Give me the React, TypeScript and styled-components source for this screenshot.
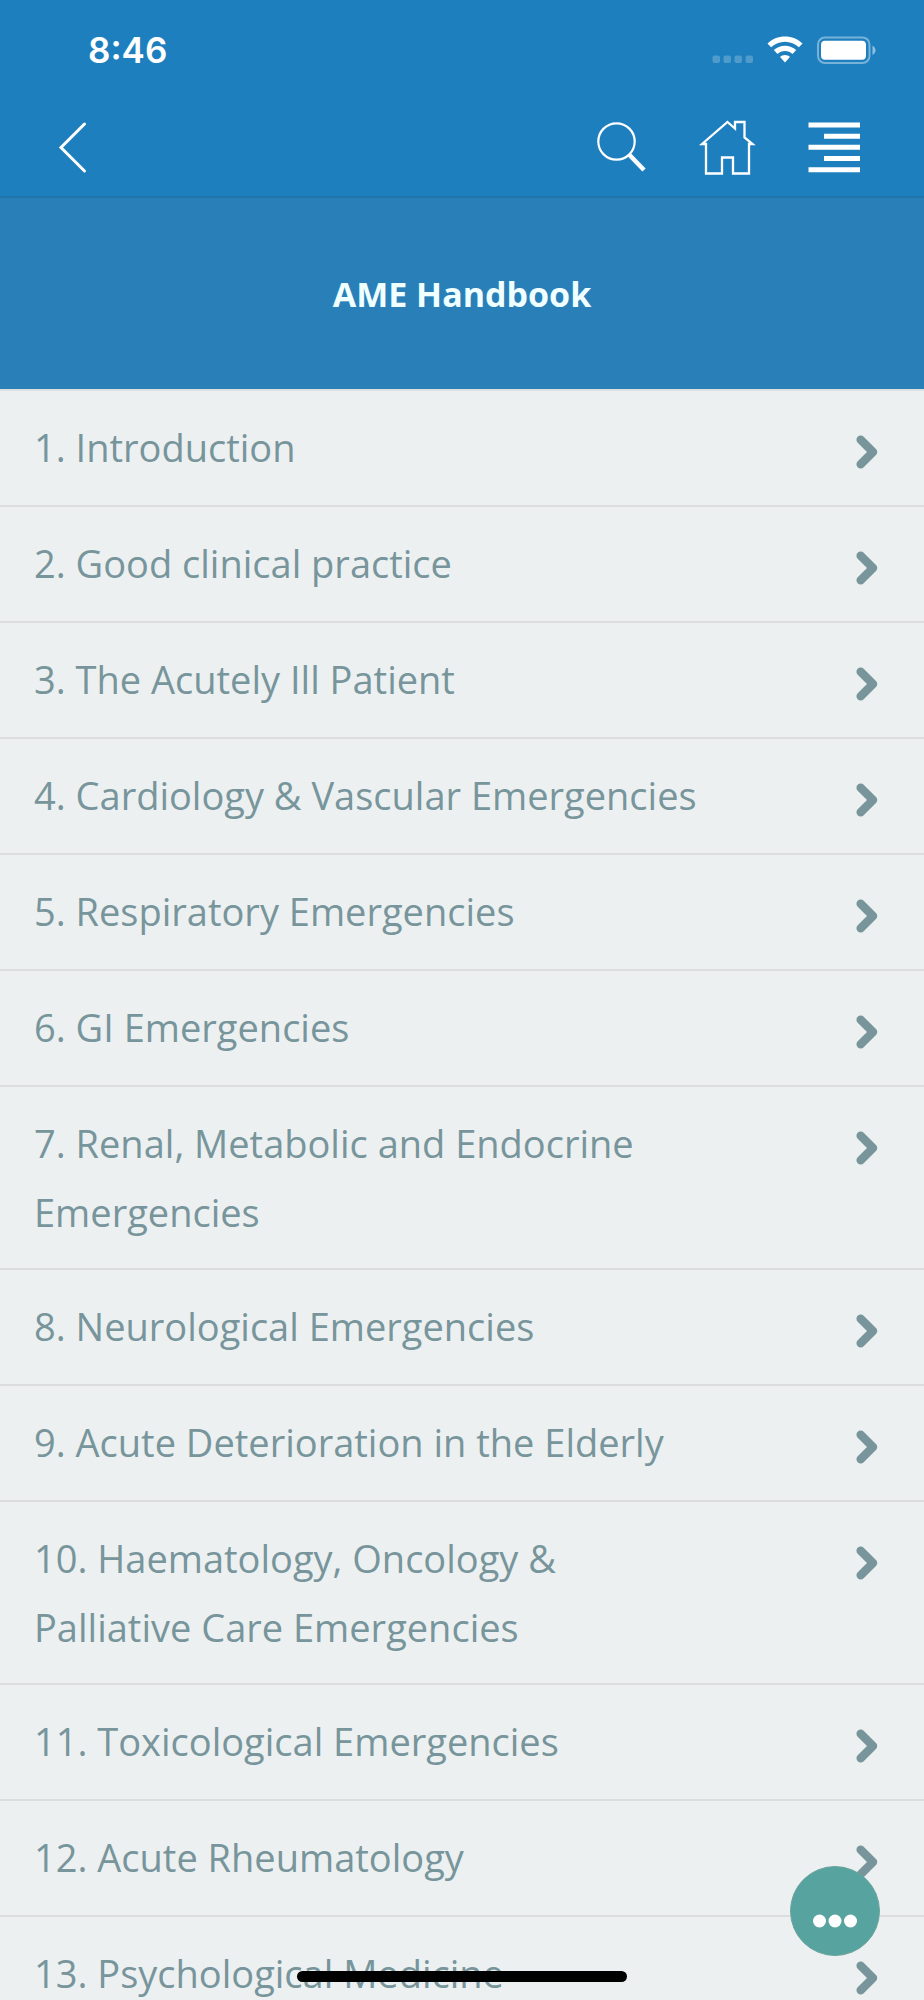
import React from "react";
import styled, { createGlobalStyle } from "styled-components";

const GlobalStyle = createGlobalStyle`
  *, *::before, *::after { box-sizing: border-box; }
  body { margin: 0; background: #ecf0f1; }
`;

const Screen = styled.div`
  position: relative;
  display: flex;
  flex-direction: column;
  height: 100vh;
  overflow: hidden;
  background: #ecf0f1;
  color: #77959b;
  font-family: "Open Sans", "Noto Sans", sans-serif;
`;

const Header = styled.header`
  flex: none;
  background: #1e7fbe;
  border-bottom: 2px solid #2075ac;
`;

const StatusBar = styled.div`
  display: flex;
  align-items: center;
  justify-content: space-between;
  height: 100px;
  padding: 0 48px 0 88px;
  color: #fff;
`;

const Clock = styled.time`
  font-family: Inter, "Liberation Sans", sans-serif;
  font-size: 35px;
  font-weight: 600;
  line-height: 44px;
`;

const Indicators = styled.div`
  display: flex;
  align-items: center;
  gap: 14px;
`;

const NavBar = styled.nav`
  display: flex;
  align-items: center;
  justify-content: space-between;
  height: 96px;
  padding: 0 63px 0 44px;
`;

const NavActions = styled.div`
  display: flex;
  align-items: center;
  gap: 47px;
`;

const IconButton = styled.button`
  display: grid;
  place-items: center;
  padding: 0;
  border: 0;
  background: none;
  color: #fff;
  cursor: pointer;
`;

const Banner = styled.div`
  display: grid;
  place-items: center;
  flex: none;
  height: 191px;
  background: #2980b9;
`;

const Title = styled.h1`
  margin: 0;
  color: #f0ffff;
  font-size: 34px;
  font-weight: 700;
  line-height: 44px;
`;

const ChapterList = styled.ul`
  flex: 1;
  min-height: 0;
  margin: 0;
  padding: 0;
  list-style: none;
  overflow-y: auto;
  scrollbar-width: none;
  border-top: 2px solid #dddfe0;
`;

const Chapter = styled.li`
  border-bottom: 2px solid #dbdddf;
`;

const ChapterLink = styled.a`
  display: flex;
  align-items: flex-start;
  justify-content: space-between;
  min-height: 114px;
  padding: 22px 46px 21px 34px;
  color: inherit;
  text-decoration: none;
`;

const ChapterName = styled.span`
  flex: 0 1 80%;
  font-size: 38px;
  line-height: 69px;
`;

const Chevron = styled.svg`
  flex: none;
  margin-top: 22px;
`;

const MoreButton = styled.button`
  position: absolute;
  right: 44px;
  bottom: 44px;
  display: grid;
  place-items: center;
  width: 90px;
  height: 90px;
  padding: 20px 0 0;
  border: 1px solid #6ba49c;
  border-radius: 50%;
  background: #57a3a0;
  cursor: pointer;
`;

const HomeIndicator = styled.div`
  position: absolute;
  left: 50%;
  bottom: 18px;
  width: 330px;
  height: 11px;
  border-radius: 6px;
  background: #000;
  transform: translateX(-50%);
`;

const chapters = [
  "Introduction",
  "Good clinical practice",
  "The Acutely Ill Patient",
  "Cardiology & Vascular Emergencies",
  "Respiratory Emergencies",
  "GI Emergencies",
  "Renal, Metabolic and Endocrine Emergencies",
  "Neurological Emergencies",
  "Acute Deterioration in the Elderly",
  "Haematology, Oncology & Palliative Care Emergencies",
  "Toxicological Emergencies",
  "Acute Rheumatology",
  "Psychological Medicine",
];

const SignalDots = () => (
  <svg width="41" height="28" viewBox="0 0 41 28" fill="#fff" fillOpacity="0.22" aria-hidden="true">
    {[0.5, 11.5, 22.5, 33.5].map((x) => (
      <rect key={x} x={x} y="19.5" width="7.5" height="7.5" rx="2" />
    ))}
  </svg>
);

const Wifi = () => (
  <svg width="36" height="28" viewBox="0 0 36 28" fill="#fff" aria-hidden="true">
    <path d="M18 .5c6.700 0 12.900 2.600 17.500 7l-3.600 3.800C28.200 7.800 23.300 5.700 18 5.700S7.800 7.800 4.100 11.300L.5 7.500C5.100 3.100 11.300.5 18 .5z" />
    <path d="M18 9.700c4.300 0 8.200 1.600 11.200 4.400l-3.700 3.800c-2-1.800-4.600-2.900-7.500-2.900s-5.500 1.100-7.500 2.900l-3.700-3.800c3-2.800 6.900-4.400 11.200-4.400z" />
    <path d="M18 19c1.900 0 3.600.7 4.900 1.900L18 26.500l-4.900-5.600C14.400 19.700 16.100 19 18 19z" />
  </svg>
);

const Battery = () => (
  <svg width="59" height="28" viewBox="0 0 59 28" aria-hidden="true">
    <rect x="1" y="1.500" width="51.500" height="25.500" rx="7" fill="none" stroke="#fff" strokeOpacity="0.4" strokeWidth="2" />
    <rect x="4" y="4.700" width="45" height="19" rx="4" fill="#fff" />
    <path d="M55.500 9.700c1.900.8 3 2.600 3 4.600s-1.100 3.800-3 4.600z" fill="#fff" fillOpacity="0.5" />
  </svg>
);

const BackIcon = () => (
  <svg width="58" height="58" viewBox="0 0 58 58" fill="none" stroke="currentColor" strokeWidth="3" strokeLinecap="round" aria-hidden="true">
    <path d="M40.500 5 17 28.500 40.500 52" />
  </svg>
);

const SearchIcon = () => (
  <svg width="58" height="58" viewBox="0 0 58 58" fill="none" stroke="currentColor" aria-hidden="true">
    <circle cx="23.500" cy="22.500" r="18.200" strokeWidth="2.200" />
    <path d="M36 35.500 51 51" strokeWidth="4.500" />
  </svg>
);

const HomeIcon = () => (
  <svg width="58" height="58" viewBox="0 0 58 58" fill="none" stroke="currentColor" strokeWidth="2.300" aria-hidden="true">
    <path d="M29.500 3 37 9.500V3h9.500v15.500l8 6.500H51v29.500H35V38.500H24v16H8V25H4z" />
  </svg>
);

const MenuIcon = () => (
  <svg width="58" height="58" viewBox="0 0 58 58" stroke="currentColor" strokeWidth="5" aria-hidden="true">
    <path d="M5.500 6H57M21 17.200H57M5.500 28.300H57M21 39.500H57M5.500 50.700H57" />
  </svg>
);

export default function App() {
  return (
    <Screen>
      <GlobalStyle />
      <Header>
        <StatusBar>
          <Clock>8:46</Clock>
          <Indicators>
            <SignalDots />
            <Wifi />
            <Battery />
          </Indicators>
        </StatusBar>
        <NavBar>
          <IconButton aria-label="Back"><BackIcon /></IconButton>
          <NavActions>
            <IconButton aria-label="Search"><SearchIcon /></IconButton>
            <IconButton aria-label="Home"><HomeIcon /></IconButton>
            <IconButton aria-label="Menu"><MenuIcon /></IconButton>
          </NavActions>
        </NavBar>
      </Header>
      <Banner>
        <Title>AME Handbook</Title>
      </Banner>
      <ChapterList>
        {chapters.map((name, i) => (
          <Chapter key={name}>
            <ChapterLink href={`#chapter-${i + 1}`}>
              <ChapterName>{`${i + 1}. ${name}`}</ChapterName>
              <Chevron width="22" height="34" viewBox="0 0 22 34" fill="none" stroke="currentColor" strokeWidth="8.500" strokeLinecap="round" strokeLinejoin="round" aria-hidden="true">
                <path d="M4.700 4.800 17 17 4.700 29.200" />
              </Chevron>
            </ChapterLink>
          </Chapter>
        ))}
      </ChapterList>
      <MoreButton aria-label="More">
        <svg width="46" height="14" viewBox="0 0 46 14" fill="#fff" aria-hidden="true">
          <circle cx="7.500" cy="7" r="6.500" />
          <circle cx="23" cy="7" r="6.500" />
          <circle cx="38.500" cy="7" r="6.500" />
        </svg>
      </MoreButton>
      <HomeIndicator />
    </Screen>
  );
}
